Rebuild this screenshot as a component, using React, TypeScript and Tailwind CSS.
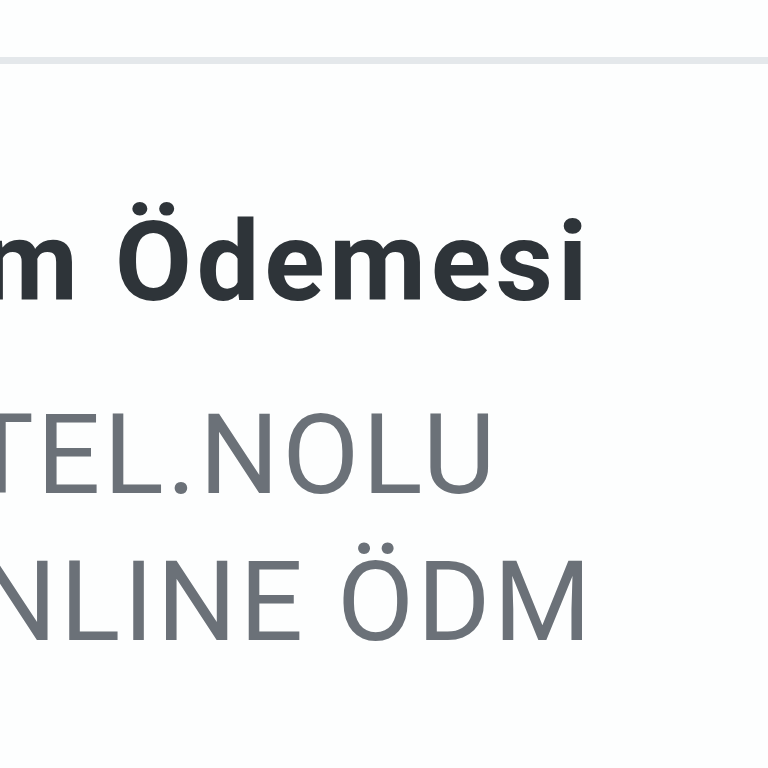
export default function App() {
  return (
    <div className="w-[768px] h-[768px] bg-[#fdfefe] overflow-hidden flex flex-col" style={{ fontFamily: 'Roboto, "Open Sans", sans-serif' }}>
      <div className="h-[57px]" />
      <div className="h-[7px] bg-[#e4e8eb]" />
      <div className="flex flex-col pt-[142px]">
        <div className="ml-[-19px] whitespace-nowrap text-[112px] leading-[112px] font-bold text-[#2e3439] tracking-[4.5px]">m Ödemesi</div>
        <div className="mt-[63px] flex flex-col whitespace-nowrap text-[112px] leading-[147px] text-[#6b7178] tracking-[3px]">
          <div className="ml-[-33px]">TEL.NOLU</div>
          <div className="ml-[-23px]">NLINE ÖDM</div>
        </div>
      </div>
    </div>
  );
}
